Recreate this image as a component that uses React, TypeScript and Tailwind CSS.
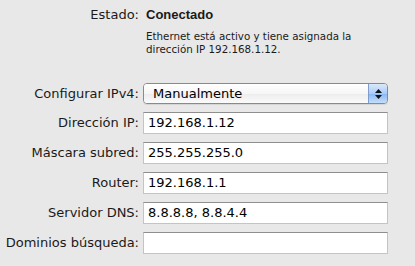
import React from 'react';

const labelFont = { fontFamily: '"DejaVu Sans", "Liberation Sans", sans-serif' };

const fields: { label: string; value: string }[] = [
  { label: 'Dirección IP:', value: '192.168.1.12' },
  { label: 'Máscara subred:', value: '255.255.255.0' },
  { label: 'Router:', value: '192.168.1.1' },
  { label: 'Servidor DNS:', value: '8.8.8.8, 8.8.4.4' },
  { label: 'Dominios búsqueda:', value: '' },
];

const TextField: React.FC<{ value: string }> = ({ value }) => (
  <div className="h-[22px] w-[245px] bg-white border border-[#c4c4c4] border-t-[#8e8e8e] flex items-center pl-[4px] text-[13px] text-black">
    {value}
  </div>
);

const PopUp: React.FC<{ value: string }> = ({ value }) => (
  <div className="h-[21px] w-[245px] flex rounded-[4px] border border-[#8a8a8a] overflow-hidden shadow-[0_1px_0_rgba(0,0,0,0.08)]">
    <div className="flex-1 flex items-center pl-[9px] text-[13px] text-black bg-[linear-gradient(#ffffff,#f6f6f6_50%,#ececec_51%,#fbfbfb)]">
      {value}
    </div>
    <div className="w-[19px] flex flex-col items-center justify-center gap-[2px] border-l border-[#7f9ccc] bg-[linear-gradient(#dbe9fb,#a9cbf5_50%,#86b6f2_51%,#c4defc)]">
      <svg width="7" height="4" viewBox="0 0 7 4"><path d="M3.5 0 L7 4 L0 4 Z" fill="#111" /></svg>
      <svg width="7" height="4" viewBox="0 0 7 4"><path d="M0 0 L7 0 L3.5 4 Z" fill="#111" /></svg>
    </div>
  </div>
);

export default function App() {
  return (
    <div className="w-[415px] h-[266px] bg-[#e8e8e8] overflow-hidden text-[#1a1a1a]" style={labelFont}>
      <div className="grid grid-cols-[139px_1fr] gap-x-[4px] pt-[7px]">
        <div className="text-right text-[13px] leading-[16px]">Estado:</div>
        <div
          className="pl-[3px] text-[13px] leading-[16px] font-bold"
          style={{ fontFamily: '"Liberation Sans", Arial, sans-serif' }}
        >
          Conectado
        </div>
        <div />
        <div className="pl-[3px] pt-[7px] text-[10.3px] leading-[13px]">
          Ethernet está activo y tiene asignada la
          <br />
          dirección IP 192.168.1.12.
        </div>
      </div>

      <div className="grid grid-cols-[139px_1fr] gap-x-[4px] gap-y-[8px] mt-[27px] items-center">
        <div className="text-right text-[13px]">Configurar IPv4:</div>
        <PopUp value="Manualmente" />
        {fields.map((f) => (
          <React.Fragment key={f.label}>
            <div className="text-right text-[13px] whitespace-nowrap">{f.label}</div>
            <TextField value={f.value} />
          </React.Fragment>
        ))}
      </div>
    </div>
  );
}
